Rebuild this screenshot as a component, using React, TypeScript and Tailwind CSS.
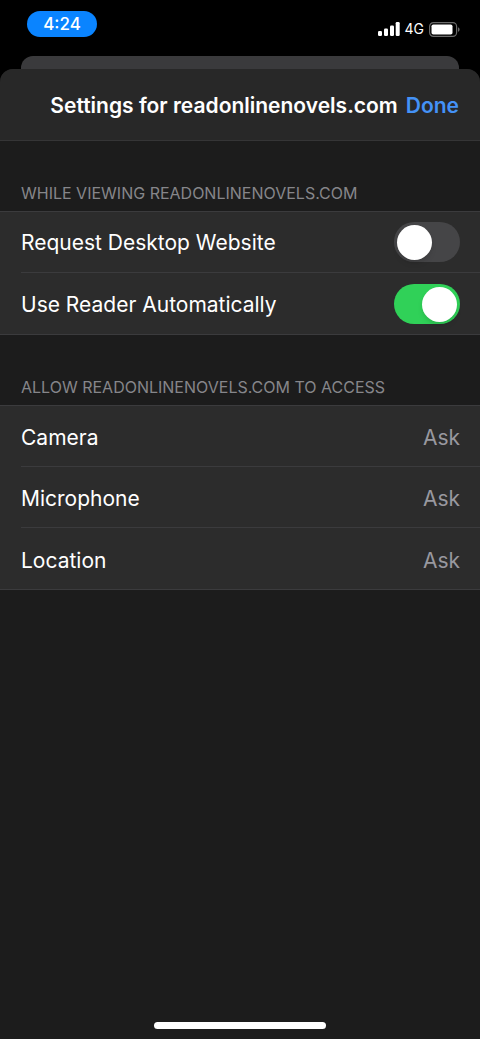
import { useState } from 'react'

const permissions = ['Camera', 'Microphone', 'Location']

function StatusBar() {
  return (
    <div className="flex h-14 items-start justify-between pl-[27px] pr-5">
      <time className="mt-[11px] flex h-[26px] w-[70px] items-center justify-center rounded-full bg-[#0a84ff] pt-0.5 text-[17px] font-medium">
        4:24
      </time>
      <div className="mt-[21px] flex h-4 items-center">
        <svg width="22" height="14" viewBox="0 0 22 14" fill="#fff" aria-hidden="true">
          <rect x="0" y="9" width="4" height="5" rx="1.2" />
          <rect x="6" y="6.5" width="4" height="7.5" rx="1.2" />
          <rect x="12" y="3.5" width="4" height="10.5" rx="1.2" />
          <rect x="17.7" y="0" width="4" height="14" rx="1.2" />
        </svg>
        <span className="ml-[5px] text-sm">4G</span>
        <svg className="ml-[5px]" width="31" height="15" viewBox="0 0 31 15" aria-hidden="true">
          <rect x="0.6" y="0.6" width="27" height="13.8" rx="3.8" fill="none" stroke="#6a6a6a" strokeWidth="1.2" />
          <rect x="2.5" y="2.5" width="21" height="10" rx="1.8" fill="#fff" />
          <path d="M29 5.2v4.6c1-.4 1.6-1.3 1.6-2.3S30 5.600 29 5.200z" fill="#6a6a6a" />
        </svg>
      </div>
    </div>
  )
}

function ToggleRow({ label, initial }: { label: string; initial: boolean }) {
  const [on, setOn] = useState(initial)

  return (
    <label className="flex h-full flex-1 cursor-pointer items-center justify-between">
      <span className="pt-0.5">{label}</span>
      <input
        type="checkbox"
        role="switch"
        checked={on}
        onChange={(e) => setOn(e.target.checked)}
        className="h-10 w-[66px] cursor-pointer appearance-none rounded-full bg-[#454547] p-[3px] transition-colors before:block before:size-[35px] before:rounded-full before:bg-white before:shadow-md before:transition-transform checked:bg-[#30d158] checked:before:translate-x-[25px]"
      />
    </label>
  )
}

function Group({ title, children }: { title: string; children: React.ReactNode }) {
  return (
    <section>
      <h2 className="flex h-[70px] items-end px-[21px] pb-2 text-base leading-5 text-[#86868a]">
        {title}
      </h2>
      <ul className="border-y border-[#3b3b3d] bg-[#2c2c2c] pl-[21px] text-[21px] text-white">
        {children}
      </ul>
    </section>
  )
}

const rowClass = 'flex h-[61px] items-center border-b border-[#3b3b3d] pr-5 last:border-b-0'

export default function App() {
  return (
    <div className="flex min-h-screen flex-col bg-black font-['Inter',sans-serif] text-white">
      <StatusBar />
      <div className="mx-[21px] h-[13px] rounded-t-xl bg-[#3a3a3c]" />
      <div className="flex flex-1 flex-col rounded-t-[13px] bg-[#1c1c1c]">
        <header className="flex h-[72px] items-center justify-end gap-2 rounded-t-[13px] border-b border-[#353536] bg-[#282828] px-[21px] pt-0.5 text-[21px]">
          <h1 className="whitespace-nowrap font-semibold">Settings for readonlinenovels.com</h1>
          <button type="button" className="font-semibold text-[#4492f7]">
            Done
          </button>
        </header>

        <main className="flex-1">
          <Group title="WHILE VIEWING READONLINENOVELS.COM">
            <li className={rowClass}>
              <ToggleRow label="Request Desktop Website" initial={false} />
            </li>
            <li className={rowClass}>
              <ToggleRow label="Use Reader Automatically" initial />
            </li>
          </Group>

          <Group title="ALLOW READONLINENOVELS.COM TO ACCESS">
            {permissions.map((name) => (
              <li key={name} className={rowClass}>
                <button type="button" className="flex h-full flex-1 items-center justify-between pt-1">
                  <span>{name}</span>
                  <span className="text-[#98989f]">Ask</span>
                </button>
              </li>
            ))}
          </Group>
        </main>

        <div className="mx-auto mb-[10px] h-[7px] w-[172px] rounded-full bg-white" />
      </div>
    </div>
  )
}
